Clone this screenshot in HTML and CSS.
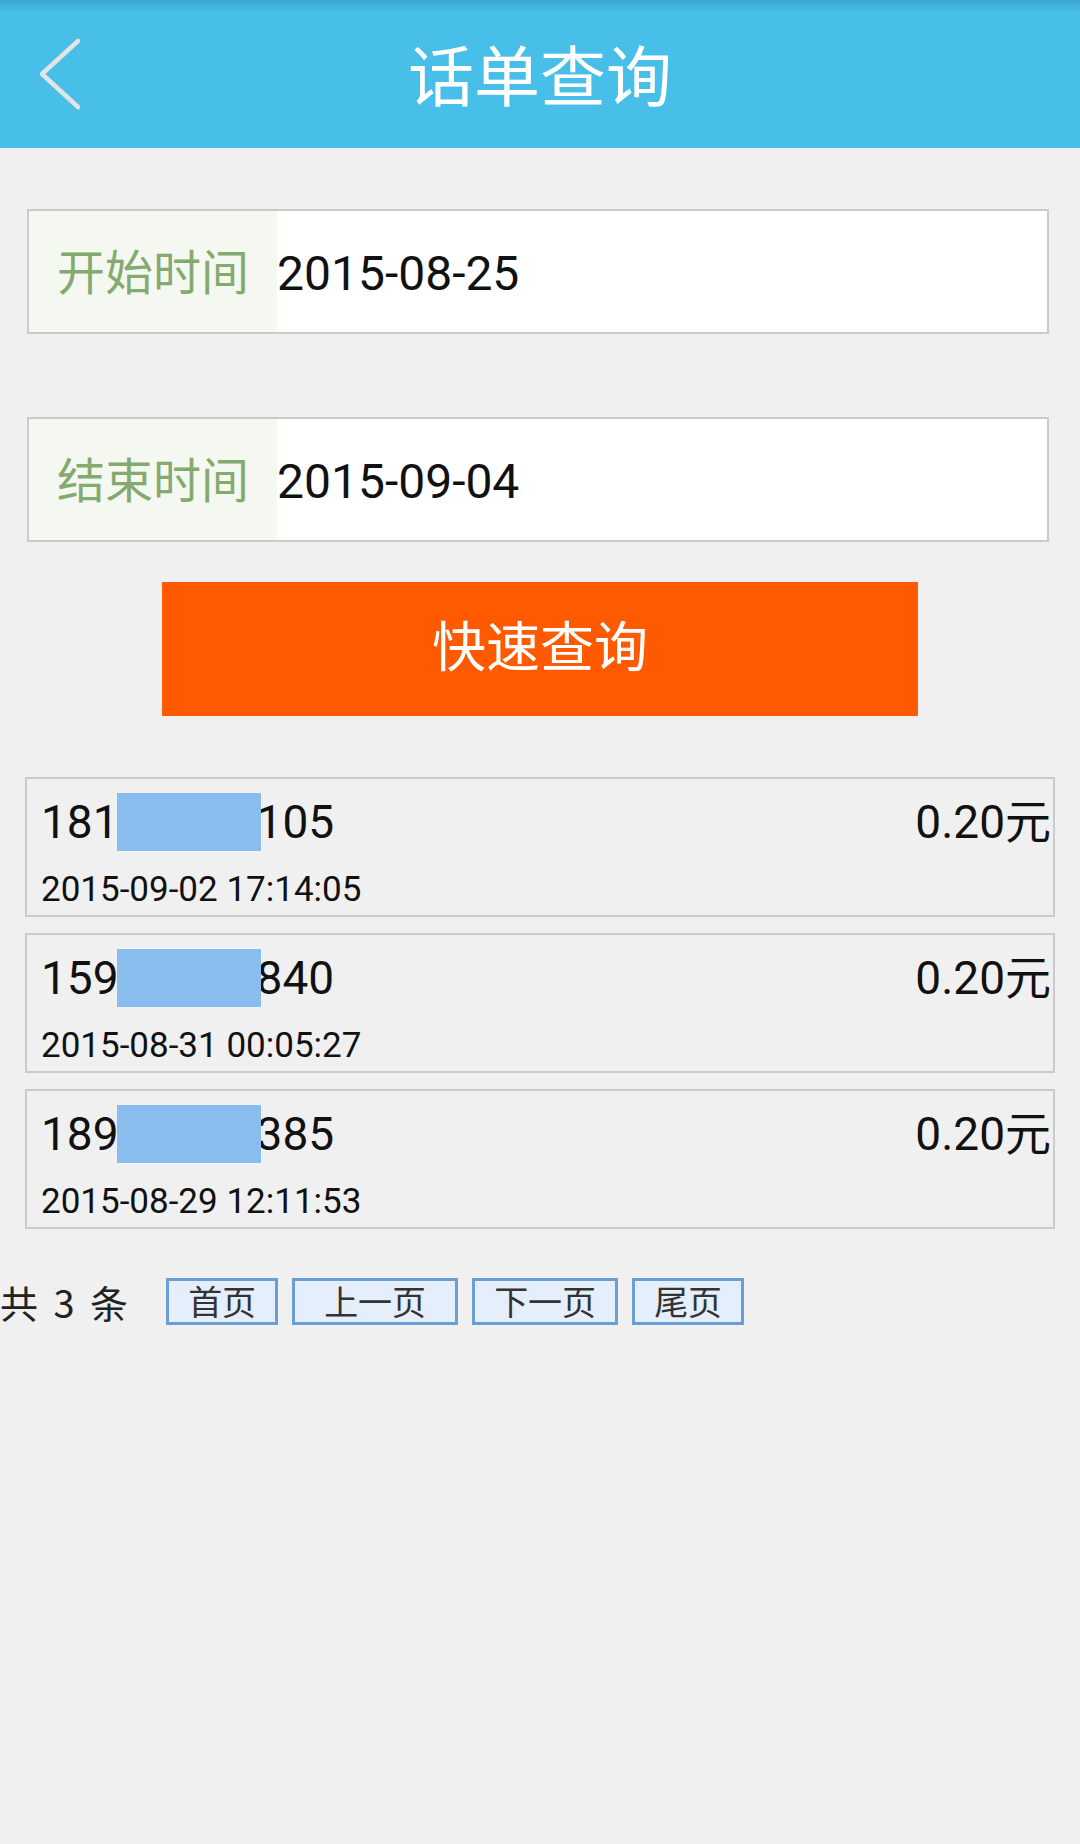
FILE: index.html
```html
<!doctype html>
<html lang="zh-CN">
	<head>
		<meta charset="UTF-8">
		<title>话单查询</title>
		<link rel="stylesheet" href="styles.css">
	</head>
	<body>
		<div class="topbar">
			<a class="back" href="#">
				<svg width="44" height="74" viewBox="0 0 44 74"><polyline points="40,4 4,37 40,70" fill="none" stroke="#e4e4e4" stroke-width="4.5" stroke-linecap="round" stroke-linejoin="round"/></svg>
			</a>
			<h1 class="title">话单查询</h1>
			<span></span>
		</div>

		<div class="search">
			<div class="field">
				<span class="field-label">开始时间</span>
				<span class="field-value">2015-08-25</span>
			</div>
			<div class="field">
				<span class="field-label">结束时间</span>
				<span class="field-value">2015-09-04</span>
			</div>
			<button class="btn-query" type="button">快速查询</button>
		</div>

		<ul class="bill-list">
			<li class="bill">
				<div class="bill-top">
					<span class="phone">181<i class="mask"></i>105</span>
					<span class="fee">0.20元</span>
				</div>
				<div class="bill-time">2015-09-02 17:14:05</div>
			</li>
			<li class="bill">
				<div class="bill-top">
					<span class="phone">159<i class="mask"></i>840</span>
					<span class="fee">0.20元</span>
				</div>
				<div class="bill-time">2015-08-31 00:05:27</div>
			</li>
			<li class="bill">
				<div class="bill-top">
					<span class="phone">189<i class="mask"></i>385</span>
					<span class="fee">0.20元</span>
				</div>
				<div class="bill-time">2015-08-29 12:11:53</div>
			</li>
		</ul>

		<div class="pager">
			<span class="total">共 3 条</span>
			<a href="#">首页</a>
			<a href="#" class="prev">上一页</a>
			<a href="#">下一页</a>
			<a href="#">尾页</a>
		</div>
	</body>
</html>
```

FILE: styles.css
```css
body{
	margin: 0;
	background-color: #f0f0f0;
	font-family: Roboto, "Noto Sans CJK SC", sans-serif;
	color: #111;
}
.topbar{
	height: 148px;
	background: linear-gradient(to bottom, #3aa5cd 0, #47bfe8 12px);
	display: grid;
	grid-template-columns: 120px 1fr 120px;
	align-items: center;
}
.back{
	display: block;
	padding-left: 38px;
	height: 74px;
}
.back svg{
	display: block;
}
.title{
	margin: 0;
	padding-bottom: 4px;
	text-align: center;
	color: #fff;
	font-size: 66px;
	font-weight: normal;
	font-family: "Noto Sans CJK SC", sans-serif;
}

/* 查询条件 */
.search{
	padding-top: 61px;
}
.field{
	display: flex;
	height: 125px;
	margin: 0 31px 0 27px;
	box-sizing: border-box;
	border: 2px solid #cbcbcb;
	background-color: #fff;
}
.field + .field{
	margin-top: 83px;
}
.field-label{
	display: flex;
	align-items: center;
	width: 248px;
	padding: 0 0 5px 28px;
	box-sizing: border-box;
	background-color: #f4f8f1;
	color: #84aa70;
	font-size: 48px;
	font-family: "Noto Sans CJK SC", sans-serif;
}
.field-value{
	display: flex;
	align-items: center;
	padding-top: 3px;
	font-size: 48px;
}
.btn-query{
	display: block;
	width: 756px;
	height: 134px;
	margin: 40px auto 0;
	padding: 0 0 12px;
	border: none;
	background-color: #ff5a00;
	color: #fff;
	font-size: 54px;
	font-family: "Noto Sans CJK SC", sans-serif;
	cursor: pointer;
}

/* 话单列表 */
.bill-list{
	list-style: none;
	margin: 61px 25px 0;
	padding: 0;
}
.bill{
	height: 140px;
	box-sizing: border-box;
	border: 2px solid #cbcbcb;
	padding: 14px 2px 0 14px;
}
.bill + .bill{
	margin-top: 16px;
}
.bill-top{
	display: flex;
	justify-content: space-between;
	font-size: 46px;
	line-height: 58px;
}
.mask{
	position: relative;
	display: inline-block;
	width: 144px;
	height: 58px;
	margin: 0 -4px 0 -2px;
	vertical-align: top;
	background-color: #89bdee;
}
.bill-time{
	margin-top: 19px;
	font-size: 35px;
	line-height: 40px;
}

/* 分页 */
.pager{
	display: flex;
	align-items: center;
	margin-top: 49px;
	font-family: "Noto Sans CJK SC", sans-serif;
}
.total{
	margin-right: 38px;
	font-size: 38px;
	line-height: 40px;
	color: #222;
	word-spacing: 7px;
}
.pager a{
	height: 47px;
	box-sizing: border-box;
	margin-right: 14px;
	padding: 0 19px;
	border: 3px solid #6a9ed6;
	background-color: #e4effb;
	color: #333;
	font-size: 34px;
	line-height: 39px;
	text-decoration: none;
}
.pager .prev{
	padding: 0 29px;
}
```
